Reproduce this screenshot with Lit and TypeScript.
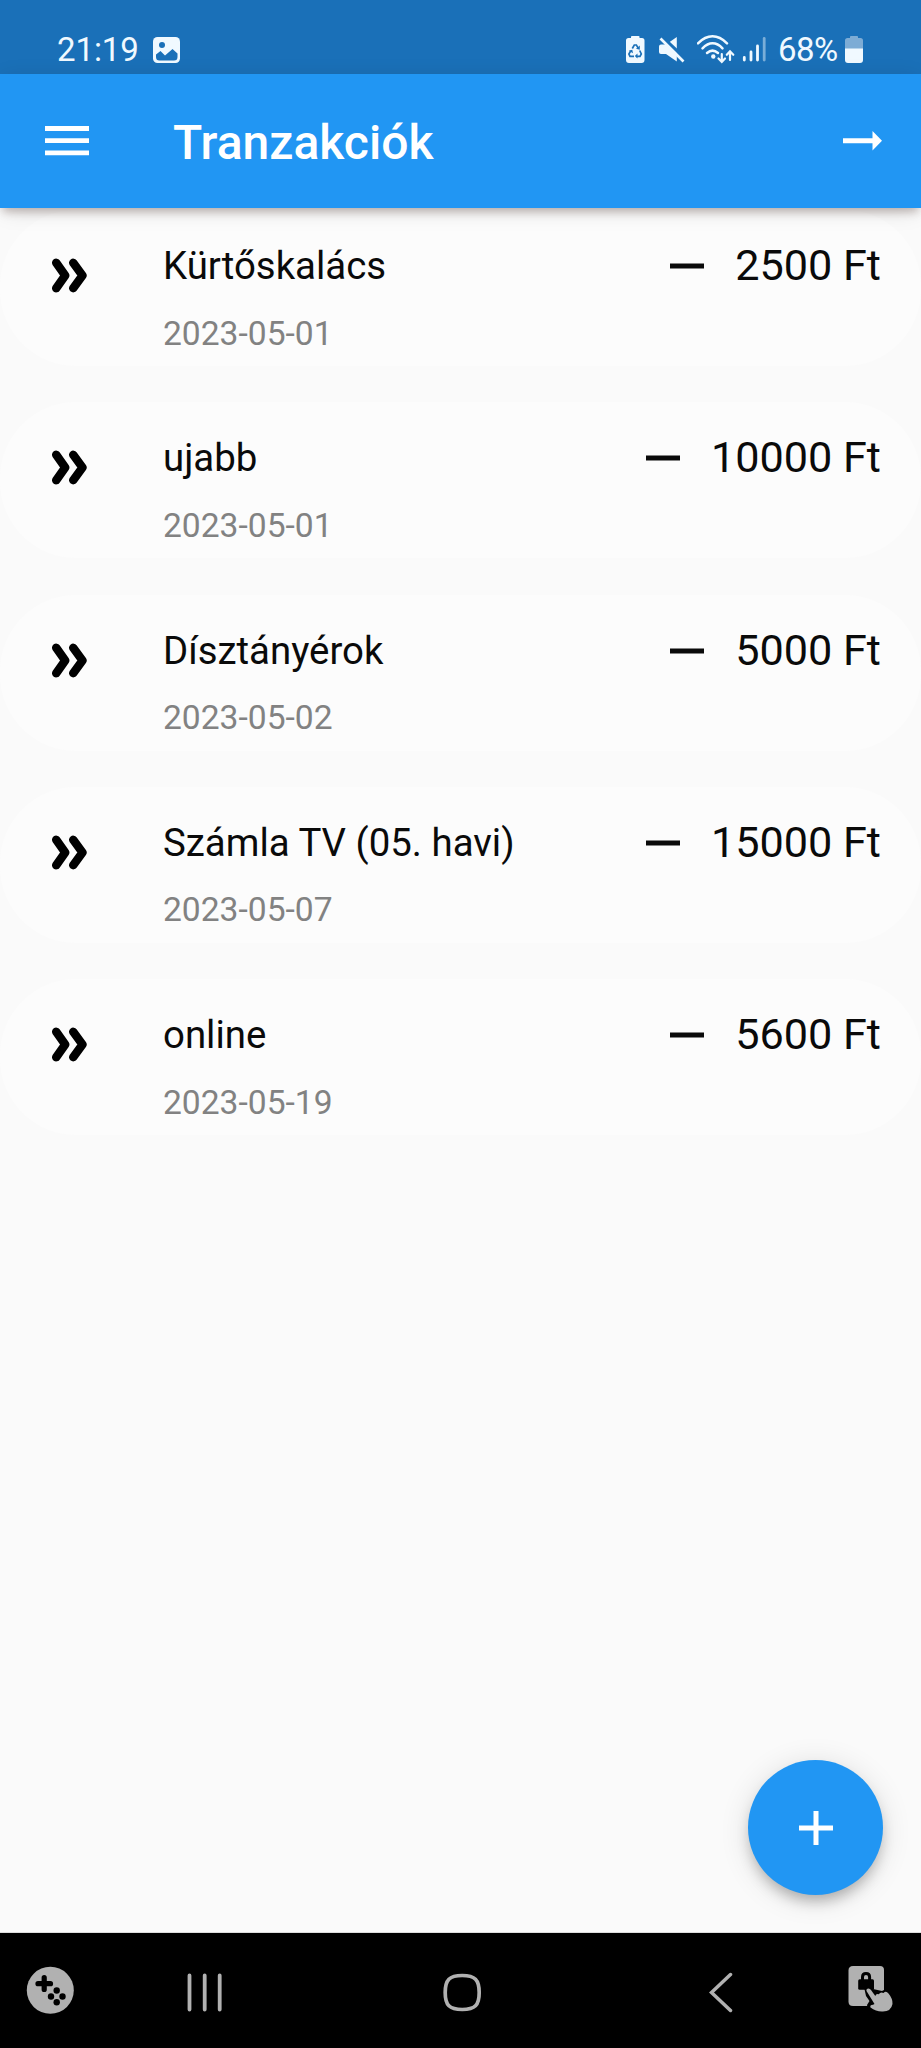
import { LitElement, html, css } from "lit";
import { customElement, property } from "lit/decorators.js";

interface Transaction {
  name: string;
  date: string;
  amount: number;
}

const TRANSACTIONS: Transaction[] = [
  { name: "Kürtőskalács", date: "2023-05-01", amount: 2500 },
  { name: "ujabb", date: "2023-05-01", amount: 10000 },
  { name: "Dísztányérok", date: "2023-05-02", amount: 5000 },
  { name: "Számla TV (05. havi)", date: "2023-05-07", amount: 15000 },
  { name: "online", date: "2023-05-19", amount: 5600 },
];

@customElement("status-bar")
class StatusBar extends LitElement {
  static styles = css`
    :host {
      display: flex;
      box-sizing: border-box;
      height: 73.5px;
      padding: 25px 57px 0 57px;
      background: #1a70b8;
      color: #f0f9ff;
      font: 33px/50px Roboto, sans-serif;
    }
    svg { display: block; flex: none; margin-top: 8px; }
    .time { width: 82px; letter-spacing: -0.1px; }
    .photo { margin-left: 13px; }
    .spacer { flex: 1; }
    .mute { margin-left: 13px; }
    .wifi { margin-left: 11px; }
    .signal { margin-left: 5px; }
    .percent { width: 62px; margin-left: 11px; letter-spacing: -0.6px; white-space: nowrap; }
    .battery { margin-left: 5px; }
  `;
  render() {
    return html`
      <span class="time">21:19</span>
      <svg class="photo" width="28" height="32" viewBox="152 33 28 32">
        <rect x="153" y="37" width="27" height="26" rx="4.5" fill="#f0f9ff" />
        <circle cx="162" cy="45" r="3" fill="#1a70b8" />
        <path d="M156 57V54.500L160.500 51L165 55.500L172.500 49L177.500 53.500V57Q177.500 60.500 174 60.500H159.500Q156 60.500 156 57Z" fill="#1a70b8" />
      </svg>
      <span class="spacer"></span>
      <svg width="19" height="32" viewBox="627 33 19 32">
        <path d="M632 38V36.800Q632 36 633 36H639.500Q640.500 36 640.500 36.800V38H643Q645.500 38 645.500 40.500V60Q645.500 63 642.500 63H630Q627 63 627 60V40.500Q627 38 629.500 38Z" fill="#f0f9ff" />
        <g fill="none" stroke="#1a70b8" stroke-width="1.700">
          <path d="M633.300 48.500L635.300 45H637.400L639.300 48.300" />
          <path d="M640.700 50.500L642.300 54L641 56.300H637.500" />
          <path d="M635 56.300H631L629.900 54L631.800 50.800" />
        </g>
        <path d="M640.800 45.500V49.800L637 48.800ZM638.500 53.500V58.500L635.800 56ZM629.800 50.800L633.300 49.700L634 53.200Z" fill="#1a70b8" />
      </svg>
      <svg class="mute" width="28" height="32" viewBox="659 33 28 32">
        <path d="M660 46.500Q660 44.500 662 44.500H667L677.800 37V61.500L667 54H662Q660 54 660 52Z" fill="#f0f9ff" />
        <path d="M661 35L687 59.500" stroke="#1a70b8" stroke-width="3.500" />
        <path d="M661.500 38.500L684.500 61.500" stroke="#f0f9ff" stroke-width="2.600" />
      </svg>
      <svg class="wifi" width="39" height="32" viewBox="698 33 39 32">
        <g fill="none" stroke="#f0f9ff" stroke-width="2.500" stroke-linecap="round">
          <path d="M699 43.300Q706 36.300 713.500 36.300Q721 36.300 728 43.300" />
          <path d="M703.500 48.300Q708.500 43.300 713.500 43.300Q718.800 43.300 723.500 48.300" />
          <path d="M708 53Q713.500 48.300 719 53" />
          <path d="M722.800 54V61M719.500 58.500L722.800 62L726 58.500M731 60V52M727.800 54.800L731 51.300L734.300 54.800" stroke-width="2.200" />
        </g>
        <circle cx="714.300" cy="56.500" r="2.200" fill="#f0f9ff" />
      </svg>
      <svg class="signal" width="26" height="32" viewBox="742 33 26 32">
        <g stroke="#f0f9ff" stroke-width="2.800" stroke-linecap="round">
          <path d="M745.300 57.500V60M752 52V60M758.500 46V60" />
          <path d="M765.200 38.500V60" opacity=".45" />
        </g>
      </svg>
      <span class="percent">68%</span>
      <svg class="battery" width="19" height="32" viewBox="846 33 19 32">
        <path d="M851 38V36.800Q851 36 852 36H858Q859 36 859 36.800V38H861.500Q864 38 864 40.500V49H846V40.500Q846 38 848.500 38Z" fill="#7dacd5" />
        <path d="M846 48.500H864V60Q864 63 861 63H849Q846 63 846 60Z" fill="#f0f9ff" />
      </svg>
    `;
  }
}

@customElement("top-bar")
class TopBar extends LitElement {
  static styles = css`
    :host {
      display: flex;
      align-items: center;
      box-sizing: border-box;
      height: 134.5px;
      padding: 0 38px 0 45px;
      background: #2196f3;
      position: relative;
      z-index: 1;
      box-shadow: 0 7px 8px -3px rgba(70, 40, 30, 0.26), 0 4px 22px -4px rgba(0, 0, 0, 0.18);
    }
    svg { display: block; }
    .title {
      flex: 1;
      margin: 0 0 0 84px;
      color: #fff;
      font: 500 48px/56px Roboto, sans-serif;
      padding-top: 4px;
    }
  `;
  render() {
    return html`
      <svg width="44" height="30" viewBox="0 0 44 30">
        <path d="M0 2.500H44M0 14.700H44M0 26.900H44" stroke="#fff" stroke-width="4.800" />
      </svg>
      <h1 class="title">Tranzakciók</h1>
      <svg width="40" height="20" viewBox="0 0 40 20">
        <path d="M0 7.200H29.500V0L39 9.700L29.500 19.500V12.200H0Z" fill="#fff" />
      </svg>
    `;
  }
}

@customElement("transaction-row")
class TransactionRow extends LitElement {
  @property({ attribute: false }) item!: Transaction;

  static styles = css`
    :host {
      display: grid;
      grid-template-columns: 112px 1fr auto;
      align-items: start;
      box-sizing: border-box;
      height: 156px;
      padding: 33px 40px 0 51px;
      border-radius: 76px;
      background: #fcfcfc;
      color: #0a0a0a;
      font-family: Roboto, sans-serif;
    }
    svg { display: block; }
    .chevrons { margin-top: 15px; }
    .name { font-size: 38.4px; line-height: 45px; white-space: nowrap; }
    .date { margin-top: 25.6px; color: #828282; font-size: 33.6px; line-height: 40px; }
    .amount {
      display: flex;
      gap: 31px;
      margin-top: -2px;
      font-size: 43.2px;
      line-height: 50px;
      white-space: nowrap;
    }
    .minus { margin-top: 22px; }
  `;
  render() {
    return html`
      <svg class="chevrons" width="38" height="36" viewBox="0 0 38 36">
        <path d="M5.200 4.800L14.200 17.500L5.200 30.200M22.200 4.800L31.500 17.500L22.200 30.200" fill="none" stroke="#000" stroke-width="8.400" stroke-linecap="round" stroke-linejoin="round" />
      </svg>
      <div>
        <div class="name">${this.item.name}</div>
        <div class="date">${this.item.date}</div>
      </div>
      <div class="amount">
        <svg class="minus" width="34" height="6" viewBox="0 0 34 6">
          <path d="M0 3H34" stroke="#0a0a0a" stroke-width="4.800" />
        </svg>
        <span>${this.item.amount} Ft</span>
      </div>
    `;
  }
}

@customElement("nav-bar")
class NavBar extends LitElement {
  static styles = css`
    :host {
      display: flex;
      align-items: flex-start;
      box-sizing: border-box;
      height: 115px;
      padding: 32px 26px 0 26px;
      background: #000;
    }
    svg { display: block; flex: none; }
    .recents { margin-left: 111px; }
    .home { margin-left: 219px; }
    .back { margin-left: 227px; }
    .lock { margin-left: 114px; }
  `;
  render() {
    const gray = "#b1b1b1";
    return html`
      <svg width="50" height="50" viewBox="26 1965 50 50">
        <circle cx="50.300" cy="1990.300" r="23.500" fill=${gray} />
        <path d="M44.200 1977.500V1989.500M38 1983.700H50.500" stroke="#000" stroke-width="5.200" stroke-linecap="round" />
        <circle cx="56.700" cy="1990.500" r="3.200" />
        <circle cx="51" cy="1996.500" r="3.200" />
        <circle cx="62.500" cy="1996.500" r="3.200" />
        <circle cx="56.700" cy="2002.200" r="3.200" />
      </svg>
      <svg class="recents" width="36" height="50" viewBox="187 1965 36 50">
        <path d="M189.500 1975.500V2009.500M204.700 1975.500V2009.500M219.700 1975.500V2009.500" stroke=${gray} stroke-width="3.800" stroke-linecap="round" />
      </svg>
      <svg class="home" width="40" height="50" viewBox="442 1965 40 50">
        <path d="M462.200 1975.500C475 1975.500 479.200 1979.700 479.200 1992.500S475 2009.500 462.200 2009.500S445.200 2005.300 445.200 1992.500S449.400 1975.500 462.200 1975.500Z" fill="none" stroke=${gray} stroke-width="3.700" />
      </svg>
      <svg class="back" width="25" height="50" viewBox="709 1965 25 50">
        <path d="M730.500 1974.500L711.500 1992.500L730.500 2010.500" fill="none" stroke=${gray} stroke-width="3.500" stroke-linecap="round" stroke-linejoin="miter" />
      </svg>
      <svg class="lock" width="47" height="50" viewBox="848 1965 47 50">
        <path d="M853 1966H880Q884 1966 884 1970V2006H853Q848.500 2006 848.500 2001.500V1970.500Q848.500 1966 853 1966Z" fill=${gray} />
        <path d="M864 1987L866 1996L869.500 2001L867 2005L869 2014H895V1989L886 1989L882 1991Z" fill="#000" />
        <rect x="858.200" y="1979.300" width="15.800" height="10.500" rx="1.500" />
        <path d="M862.500 1981V1977Q862.500 1973.500 866 1973.500Q869.600 1973.500 869.600 1977V1981" fill="none" stroke="#000" stroke-width="3" />
        <path d="M866.500 1991Q866 1988.500 868.500 1988.500Q870 1988.500 871 1990L875.300 1996Q876 1993.300 878.800 1994.200Q880.500 1991.500 883.500 1993Q886 1990.500 888.500 1993.500Q893 1999 892.500 2004Q891 2011.500 883 2011.500Q876.500 2012 870.500 2007.500Q869.500 2004.800 873 2004.800L874.500 2004Z" fill=${gray} />
      </svg>
    `;
  }
}

@customElement("app-root")
class AppRoot extends LitElement {
  static styles = css`
    :host {
      display: flex;
      flex-direction: column;
      height: 2048px;
      background: #fafafa;
      position: relative;
      overflow: hidden;
    }
    .list {
      flex: 1;
      display: flex;
      flex-direction: column;
      gap: 36.3px;
      padding-top: 2px;
      border-bottom: 1px solid #dcdcdc;
    }
    .fab {
      position: absolute;
      right: 38px;
      bottom: 153px;
      width: 135px;
      height: 135px;
      padding: 0;
      border: 0;
      border-radius: 50%;
      background: #2196f3;
      display: grid;
      place-items: center;
      box-shadow: 0 9px 14px -3px rgba(0, 0, 0, 0.26), 0 4px 30px rgba(0, 0, 0, 0.12);
    }
    .fab svg { display: block; }
  `;
  render() {
    return html`
      <status-bar></status-bar>
      <top-bar></top-bar>
      <main class="list">
        ${TRANSACTIONS.map((t) => html`<transaction-row .item=${t}></transaction-row>`)}
      </main>
      <button class="fab">
        <svg width="34" height="34" viewBox="0 0 34 34">
          <path d="M0 17H34M17 0V34" stroke="#fff" stroke-width="5" />
        </svg>
      </button>
      <nav-bar></nav-bar>
    `;
  }
}
